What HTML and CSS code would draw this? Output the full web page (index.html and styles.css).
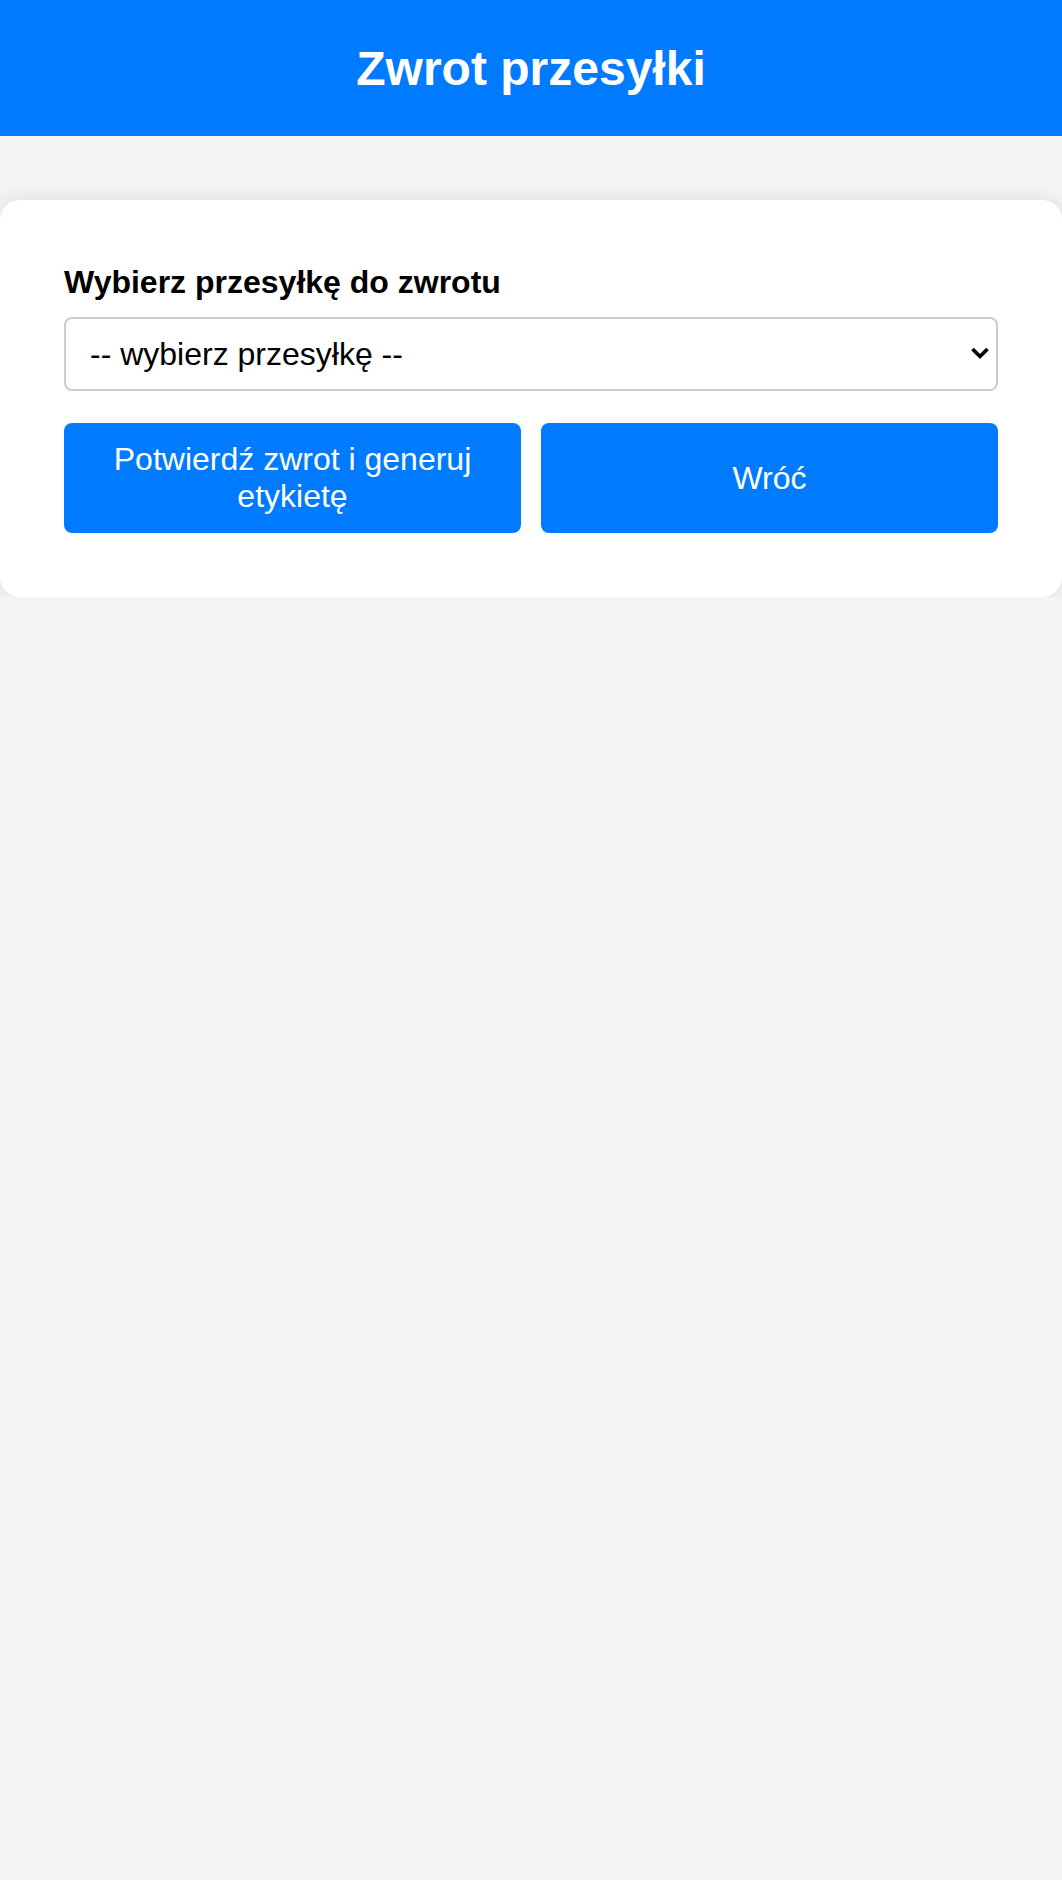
FILE: index.html
```html
<!DOCTYPE html>
<html lang="pl">
<head>
<meta charset="utf-8">
<title>Zwrot przesyłki</title>
<link rel="stylesheet" href="styles.css">
</head>
<body>
<header class="top-bar">
  <h1 class="top-title">Zwrot przesyłki</h1>
</header>
<main class="card">
  <label class="field-label" for="parcel">Wybierz przesyłkę do zwrotu</label>
  <div class="select-wrap">
    <select class="field-select" id="parcel">
      <option>-- wybierz przesyłkę --</option>
    </select>
    <svg class="select-arrow" width="20" height="14" viewBox="0 0 20 14" aria-hidden="true">
      <path d="M2.5 3 L10 10.5 L17.5 3" fill="none" stroke="#000" stroke-width="3.6" stroke-linecap="butt" stroke-linejoin="miter"/>
    </svg>
  </div>
  <div class="actions">
    <button class="btn" type="button">Potwierdź zwrot i generuj etykietę</button>
    <button class="btn" type="button">Wróć</button>
  </div>
</main>
</body>
</html>
```

FILE: styles.css
```css
html, body {
  margin: 0;
  padding: 0;
}
body {
  background: #f4f4f4;
  font-family: "Liberation Sans", Arial, sans-serif;
  color: #000;
}
.top-bar {
  background: #007bff;
  color: #fff;
  height: 136px;
  box-sizing: border-box;
  display: flex;
  align-items: center;
  justify-content: center;
}
.top-title {
  margin: 0;
  font-size: 48px;
  font-weight: bold;
  line-height: 55px;
}
.card {
  display: block;
  margin-top: 64px;
  background: #fff;
  border-radius: 20px;
  box-shadow: 0 0 20px rgba(0, 0, 0, 0.1);
  padding: 64px;
}
.field-label {
  display: block;
  font-size: 32px;
  font-weight: bold;
  line-height: 37px;
  margin-bottom: 16px;
}
.select-wrap {
  position: relative;
  margin-bottom: 32px;
}
.field-select {
  display: block;
  width: 100%;
  box-sizing: border-box;
  -webkit-appearance: none;
  appearance: none;
  font-family: "Liberation Sans", Arial, sans-serif;
  font-size: 32px;
  line-height: 37px;
  height: 74px;
  padding: 16px 60px 16px 24px;
  border: 2px solid #ccc;
  border-radius: 8px;
  background: #fff;
  color: #000;
}
.select-arrow {
  position: absolute;
  right: 8px;
  top: 29px;
  pointer-events: none;
}
.actions {
  display: flex;
  gap: 20px;
}
.btn {
  flex: 1 1 0;
  background: #007bff;
  color: #fff;
  border: none;
  border-radius: 8px;
  font-family: "Liberation Sans", Arial, sans-serif;
  font-size: 32px;
  line-height: 37px;
  padding: 18px 20px;
  cursor: pointer;
}
```
